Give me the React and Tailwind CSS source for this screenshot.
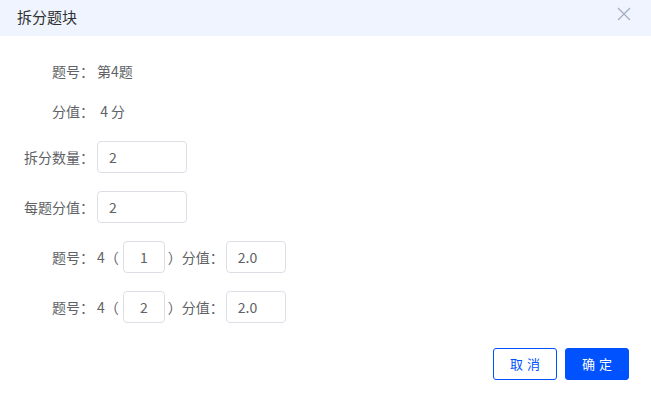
import React from "react";

const font = { fontFamily: '"Noto Sans CJK SC", "Noto Sans", sans-serif' };

function Input({ value, w, center }) {
  return (
    <div
      className={`h-[32px] ${w} border border-[#dcdfe6] rounded-[4px] bg-white flex items-center ${center ? "justify-center" : "pl-[11px]"} text-[14px] text-[#606266]`}
    >
      {value}
    </div>
  );
}

function Label({ children }) {
  return <div className="w-[94px] shrink-0 text-right pr-0 text-[14px] text-[#606266]">{children}</div>;
}

export default function App() {
  return (
    <div className="w-[651px] h-[394px] bg-white relative overflow-hidden" style={font}>
      <div className="h-[36px] bg-[#eff4fe] flex items-center pl-[17px] pr-[20px] justify-between">
        <span className="text-[15px] text-[#303133] leading-none -mt-[4px]">拆分题块</span>
        <svg width="14" height="14" viewBox="0 0 14 14" className="-mt-[8px] mr-[0px]">
          <path d="M1 1 L13 13 M13 1 L1 13" stroke="#a3abc2" strokeWidth="1.2" fill="none" />
        </svg>
      </div>
      <div className="pt-[15px]">
        <div className="h-[40px] flex items-center">
          <Label>题号：</Label>
          <span className="ml-[3px] text-[14px] text-[#606266]">第4题</span>
        </div>
        <div className="h-[40px] flex items-center">
          <Label>分值：</Label>
          <span className="ml-[3px] text-[14px] text-[#606266]">&nbsp;4 分</span>
        </div>
        <div className="mt-[10px] flex items-center">
          <Label>拆分数量：</Label>
          <div className="ml-[3px]"><Input value="2" w="w-[90px]" /></div>
        </div>
        <div className="mt-[18px] flex items-center">
          <Label>每题分值：</Label>
          <div className="ml-[3px]"><Input value="2" w="w-[90px]" /></div>
        </div>
        {["1", "2"].map((n) => (
          <div key={n} className="mt-[18px] flex items-center text-[14px] text-[#606266]">
            <Label>题号：</Label>
            <span className="ml-[3px]">4（</span>
            <div className="ml-[4px]"><Input value={n} w="w-[42px]" center /></div>
            <span className="ml-[3px]">）分值：</span>
            <div className="ml-[2px]"><Input value="2.0" w="w-[60px]" /></div>
          </div>
        ))}
        <div className="mt-[25px] flex justify-end pr-[22px] gap-[8px]">
          <button className="w-[64px] h-[32px] rounded-[3px] border border-[#0052ff] text-[#0052ff] bg-white text-[13px] tracking-[4px] pl-[4px]">取消</button>
          <button className="w-[64px] h-[32px] rounded-[3px] border border-[#0052ff] bg-[#0052ff] text-white text-[13px] tracking-[4px] pl-[4px]">确定</button>
        </div>
      </div>
    </div>
  );
}
